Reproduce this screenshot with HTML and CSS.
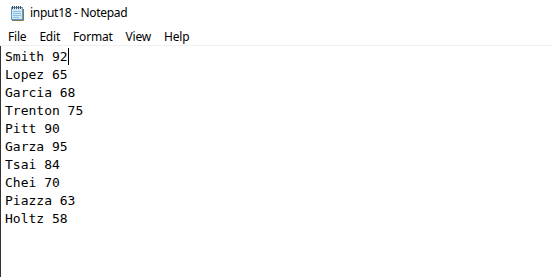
FILE: index.html
```html
<!DOCTYPE html>
<html lang="en">
<head>
    <meta charset="UTF-8">
    <title>input18 - Notepad</title>
    <link rel="stylesheet" href="styles.css">
</head>
<body>
<div id="window">
    <div id="titlebar">
        <svg class="icon" width="16" height="16" viewBox="0 0 16 16">
            <rect x="2.5" y="2.5" width="11" height="12" fill="#a9d3f0" stroke="#5b9bc8"/>
            <rect x="3" y="3" width="10" height="11" fill="#cfe8f9"/>
            <path d="M4 6.5h8M4 8.5h8M4 10.5h8M4 12.5h6" stroke="#8fbfe0" stroke-width="1"/>
            <path d="M14.5 4v11.5H3" fill="none" stroke="#8a7350"/>
            <path d="M3.5 1v3M5.5 1v3M7.5 1v3M9.5 1v3M11.5 1v3" stroke="#4a4a4a"/>
        </svg>
        <span class="title">input18 - Notepad</span>
    </div>
    <ul id="menu">
        <li>File</li>
        <li>Edit</li>
        <li>Format</li>
        <li>View</li>
        <li>Help</li>
    </ul>
    <div id="editor">
        <div class="line">Smith 92<span class="caret"></span></div>
        <div class="line">Lopez 65</div>
        <div class="line">Garcia 68</div>
        <div class="line">Trenton 75</div>
        <div class="line">Pitt 90</div>
        <div class="line">Garza 95</div>
        <div class="line">Tsai 84</div>
        <div class="line">Chei 70</div>
        <div class="line">Piazza 63</div>
        <div class="line">Holtz 58</div>
    </div>
</div>
</body>
</html>
```
FILE: styles.css
```css
* {
    padding: 0;
    margin: 0;
}

html, body {
    width: 554px;
    height: 277px;
    overflow: hidden;
    background: white;
}

li {
    list-style: none;
}

#window {
    width: 554px;
    height: 277px;
    display: flex;
    flex-direction: column;
    font-family: "Noto Sans", "Open Sans", sans-serif;
    color: black;
}

#titlebar {
    height: 28px;
    display: flex;
    align-items: center;
    padding-left: 9px;
    box-sizing: border-box;
    padding-bottom: 3px;
}

#titlebar .icon {
    margin-right: 5px;
}

#titlebar .title {
    font-size: 12px;
    letter-spacing: -0.3px;
}

#menu {
    height: 17px;
    display: flex;
    align-items: center;
    font-size: 12px;
    letter-spacing: -0.2px;
    border-bottom: 1px solid #f0f0f0;
    margin-right: 1px;
}

#menu li {
    padding: 0 6.5px;
}

#menu li:first-child {
    padding-left: 8px;
}

#editor {
    flex: 1;
    border-left: 1px solid #333;
    padding: 2px 0 0 4px;
    font-family: "DejaVu Sans Mono", monospace;
    font-size: 13px;
    line-height: 18px;
}

.caret {
    display: inline-block;
    width: 1px;
    height: 17px;
    background: black;
    vertical-align: -4px;
}
```
